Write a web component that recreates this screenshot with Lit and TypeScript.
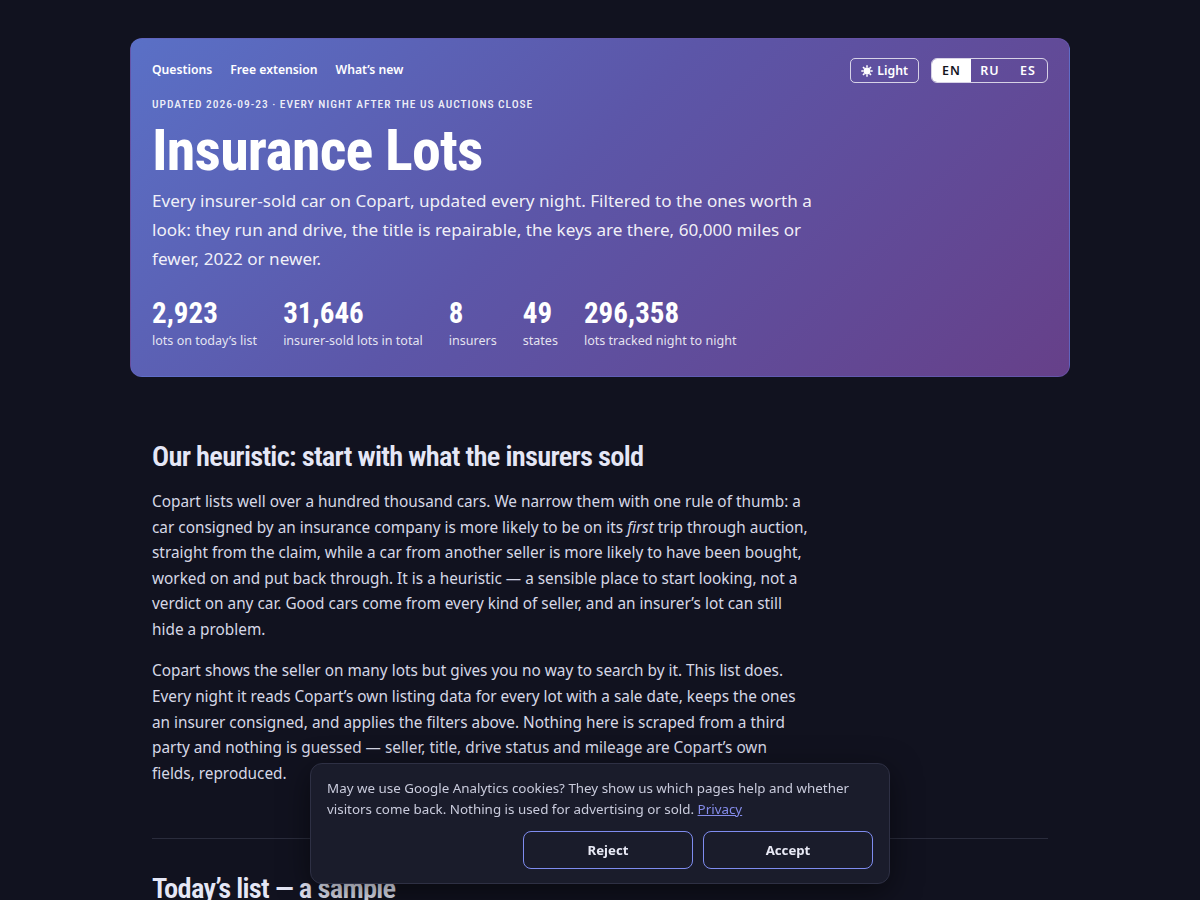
import { LitElement, html, svg, css } from "lit";
import { customElement } from "lit/decorators.js";

const stats: [string, string][] = [
  ["2,923", "lots on today’s list"],
  ["31,646", "insurer-sold lots in total"],
  ["8", "insurers"],
  ["49", "states"],
  ["296,358", "lots tracked night to night"],
];

const rays = [0, 45, 90, 135, 180, 225, 270, 315];

@customElement("app-root")
export class AppRoot extends LitElement {
  static styles = css`
    :host {
      display: block;
      box-sizing: border-box;
      background: #11121f;
      color: #d6d8e6;
      font-family: "Noto Sans", "Open Sans", sans-serif;
      padding: 38px 130px 0;
      overflow: hidden;
      height: 900px;
    }
    * { box-sizing: border-box; }
    .cond { font-family: "Roboto", sans-serif; font-stretch: 75%; }
    .hero {
      height: 339px;
      padding: 19px 21px;
      border-radius: 12px;
      background: linear-gradient(135deg, #5a70c6 0%, #5c56a8 45%, #664089 100%);
      border: 1px solid rgba(110, 110, 210, 0.3);
      color: #fff;
    }
    .top { display: flex; justify-content: space-between; align-items: flex-start; height: 25px; }
    .nav { display: flex; gap: 18px; font-size: 12.2px; font-weight: 600; line-height: 23px; }
    .ctl { display: flex; gap: 12px; align-items: center; }
    .theme {
      display: flex; align-items: center; gap: 4px;
      height: 25px; padding: 0 10px; font-size: 12.3px; font-weight: 600;
      border: 1px solid rgba(255,255,255,.75); border-radius: 5px;
    }
    .sun { width: 12px; height: 12px; display: block; }
    .sun line { stroke: #fff; stroke-width: 1.5; }
    .sun circle { fill: #fff; }
    .lang {
      display: flex; height: 25px; border: 1px solid rgba(255,255,255,.75);
      border-radius: 6px; overflow: hidden; font-size: 12.5px; font-weight: 600; letter-spacing: .08em;
    }
    .lang span { width: 38px; display: flex; align-items: center; justify-content: center; }
    .lang .on { background: #fff; color: #14151f; width: 39px; }
    .kicker {
      margin-top: 14px; font-size: 11.5px; font-weight: 500; letter-spacing: .95px;
      line-height: 14px; color: rgba(255,255,255,.9);
    }
    h1 {
      margin: 7px 0 0; font-size: 58px; font-weight: 700; line-height: 64px; letter-spacing: -.8px;
    }
    .lede { margin: 4px 0 0; font-size: 17.13px; line-height: 29px; width: 670px; color: rgba(255,255,255,.93); }
    .stats { display: flex; gap: 26px; margin-top: 23px; }
    .num { font-size: 29px; font-weight: 700; line-height: 35px; letter-spacing: .05px; }
    .lab { font-size: 12.55px; line-height: 19px; color: rgba(255,255,255,.85); }
    .body { padding: 0 22px; }
    h2 {
      margin: 0; font-size: 28.5px; font-weight: 600; line-height: 36px; letter-spacing: -.73px; color: #e5e7f6;
    }
    .body > h2:first-child { margin-top: 62px; }
    p.t { margin: 15.8px 0 0; font-size: 15.35px; line-height: 25.6px; width: 660px; }
    p.t:first-of-type { margin-top: 14px; }
    hr { border: 0; border-top: 1px solid #2a2c3c; margin: 51.6px 0 32px; }
    .cookie {
      position: fixed; left: 310px; bottom: 16px; width: 580px; height: 121px;
      padding: 14px 16px; background: #1a1c2b; border: 1px solid #2e3044; border-radius: 12px;
      box-shadow: 0 8px 30px rgba(0,0,0,.5);
      font-size: 13.38px; line-height: 21px; color: #c9cbdc;
    }
    .cookie a { color: #858cea; text-decoration: underline; }
    .btns { display: flex; justify-content: flex-end; gap: 10px; margin-top: 11px; }
    .btn {
      width: 170px; height: 38px; display: flex; align-items: center; justify-content: center;
      border: 1px solid #7f8cf0; border-radius: 8px; font-size: 13.2px; font-weight: 700; color: #e8e9f5;
    }
  `;

  render() {
    return html`
      <section class="hero">
        <div class="top">
          <div class="nav"><span>Questions</span><span>Free extension</span><span>What’s new</span></div>
          <div class="ctl">
            <div class="theme">
              <svg class="sun" viewBox="0 0 12 12" aria-hidden="true">
                <circle cx="6" cy="6" r="3.4"></circle>
                ${rays.map((a) => svg`<line x1="6" y1="0.3" x2="6" y2="2.6" transform="rotate(${a} 6 6)"></line>`)}
              </svg>
              <span>Light</span>
            </div>
            <div class="lang"><span class="on">EN</span><span>RU</span><span>ES</span></div>
          </div>
        </div>
        <div class="kicker cond">UPDATED 2026-09-23 · EVERY NIGHT AFTER THE US AUCTIONS CLOSE</div>
        <h1 class="cond">Insurance Lots</h1>
        <p class="lede">Every insurer-sold car on Copart, updated every night. Filtered to the ones worth a look: they run and drive, the title is repairable, the keys are there, 60,000 miles or fewer, 2022 or newer.</p>
        <div class="stats">
          ${stats.map(([n, l]) => html`<div><div class="num cond">${n}</div><div class="lab">${l}</div></div>`)}
        </div>
      </section>
      <main class="body">
        <h2 class="cond">Our heuristic: start with what the insurers sold</h2>
        <p class="t">Copart lists well over a hundred thousand cars. We narrow them with one rule of thumb: a car consigned by an insurance company is more likely to be on its <em>first</em> trip through auction, straight from the claim, while a car from another seller is more likely to have been bought, worked on and put back through. It is a heuristic — a sensible place to start looking, not a verdict on any car. Good cars come from every kind of seller, and an insurer’s lot can still hide a problem.</p>
        <p class="t">Copart shows the seller on many lots but gives you no way to search by it. This list does. Every night it reads Copart’s own listing data for every lot with a sale date, keeps the ones an insurer consigned, and applies the filters above. Nothing here is scraped from a third party and nothing is guessed — seller, title, drive status and mileage are Copart’s own fields, reproduced.</p>
        <hr />
        <h2 class="cond">Today’s list — a sample</h2>
      </main>
      <aside class="cookie">
        <div>May we use Google Analytics cookies? They show us which pages help and whether visitors come back. Nothing is used for advertising or sold. <a>Privacy</a></div>
        <div class="btns"><div class="btn">Reject</div><div class="btn">Accept</div></div>
      </aside>
    `;
  }
}
